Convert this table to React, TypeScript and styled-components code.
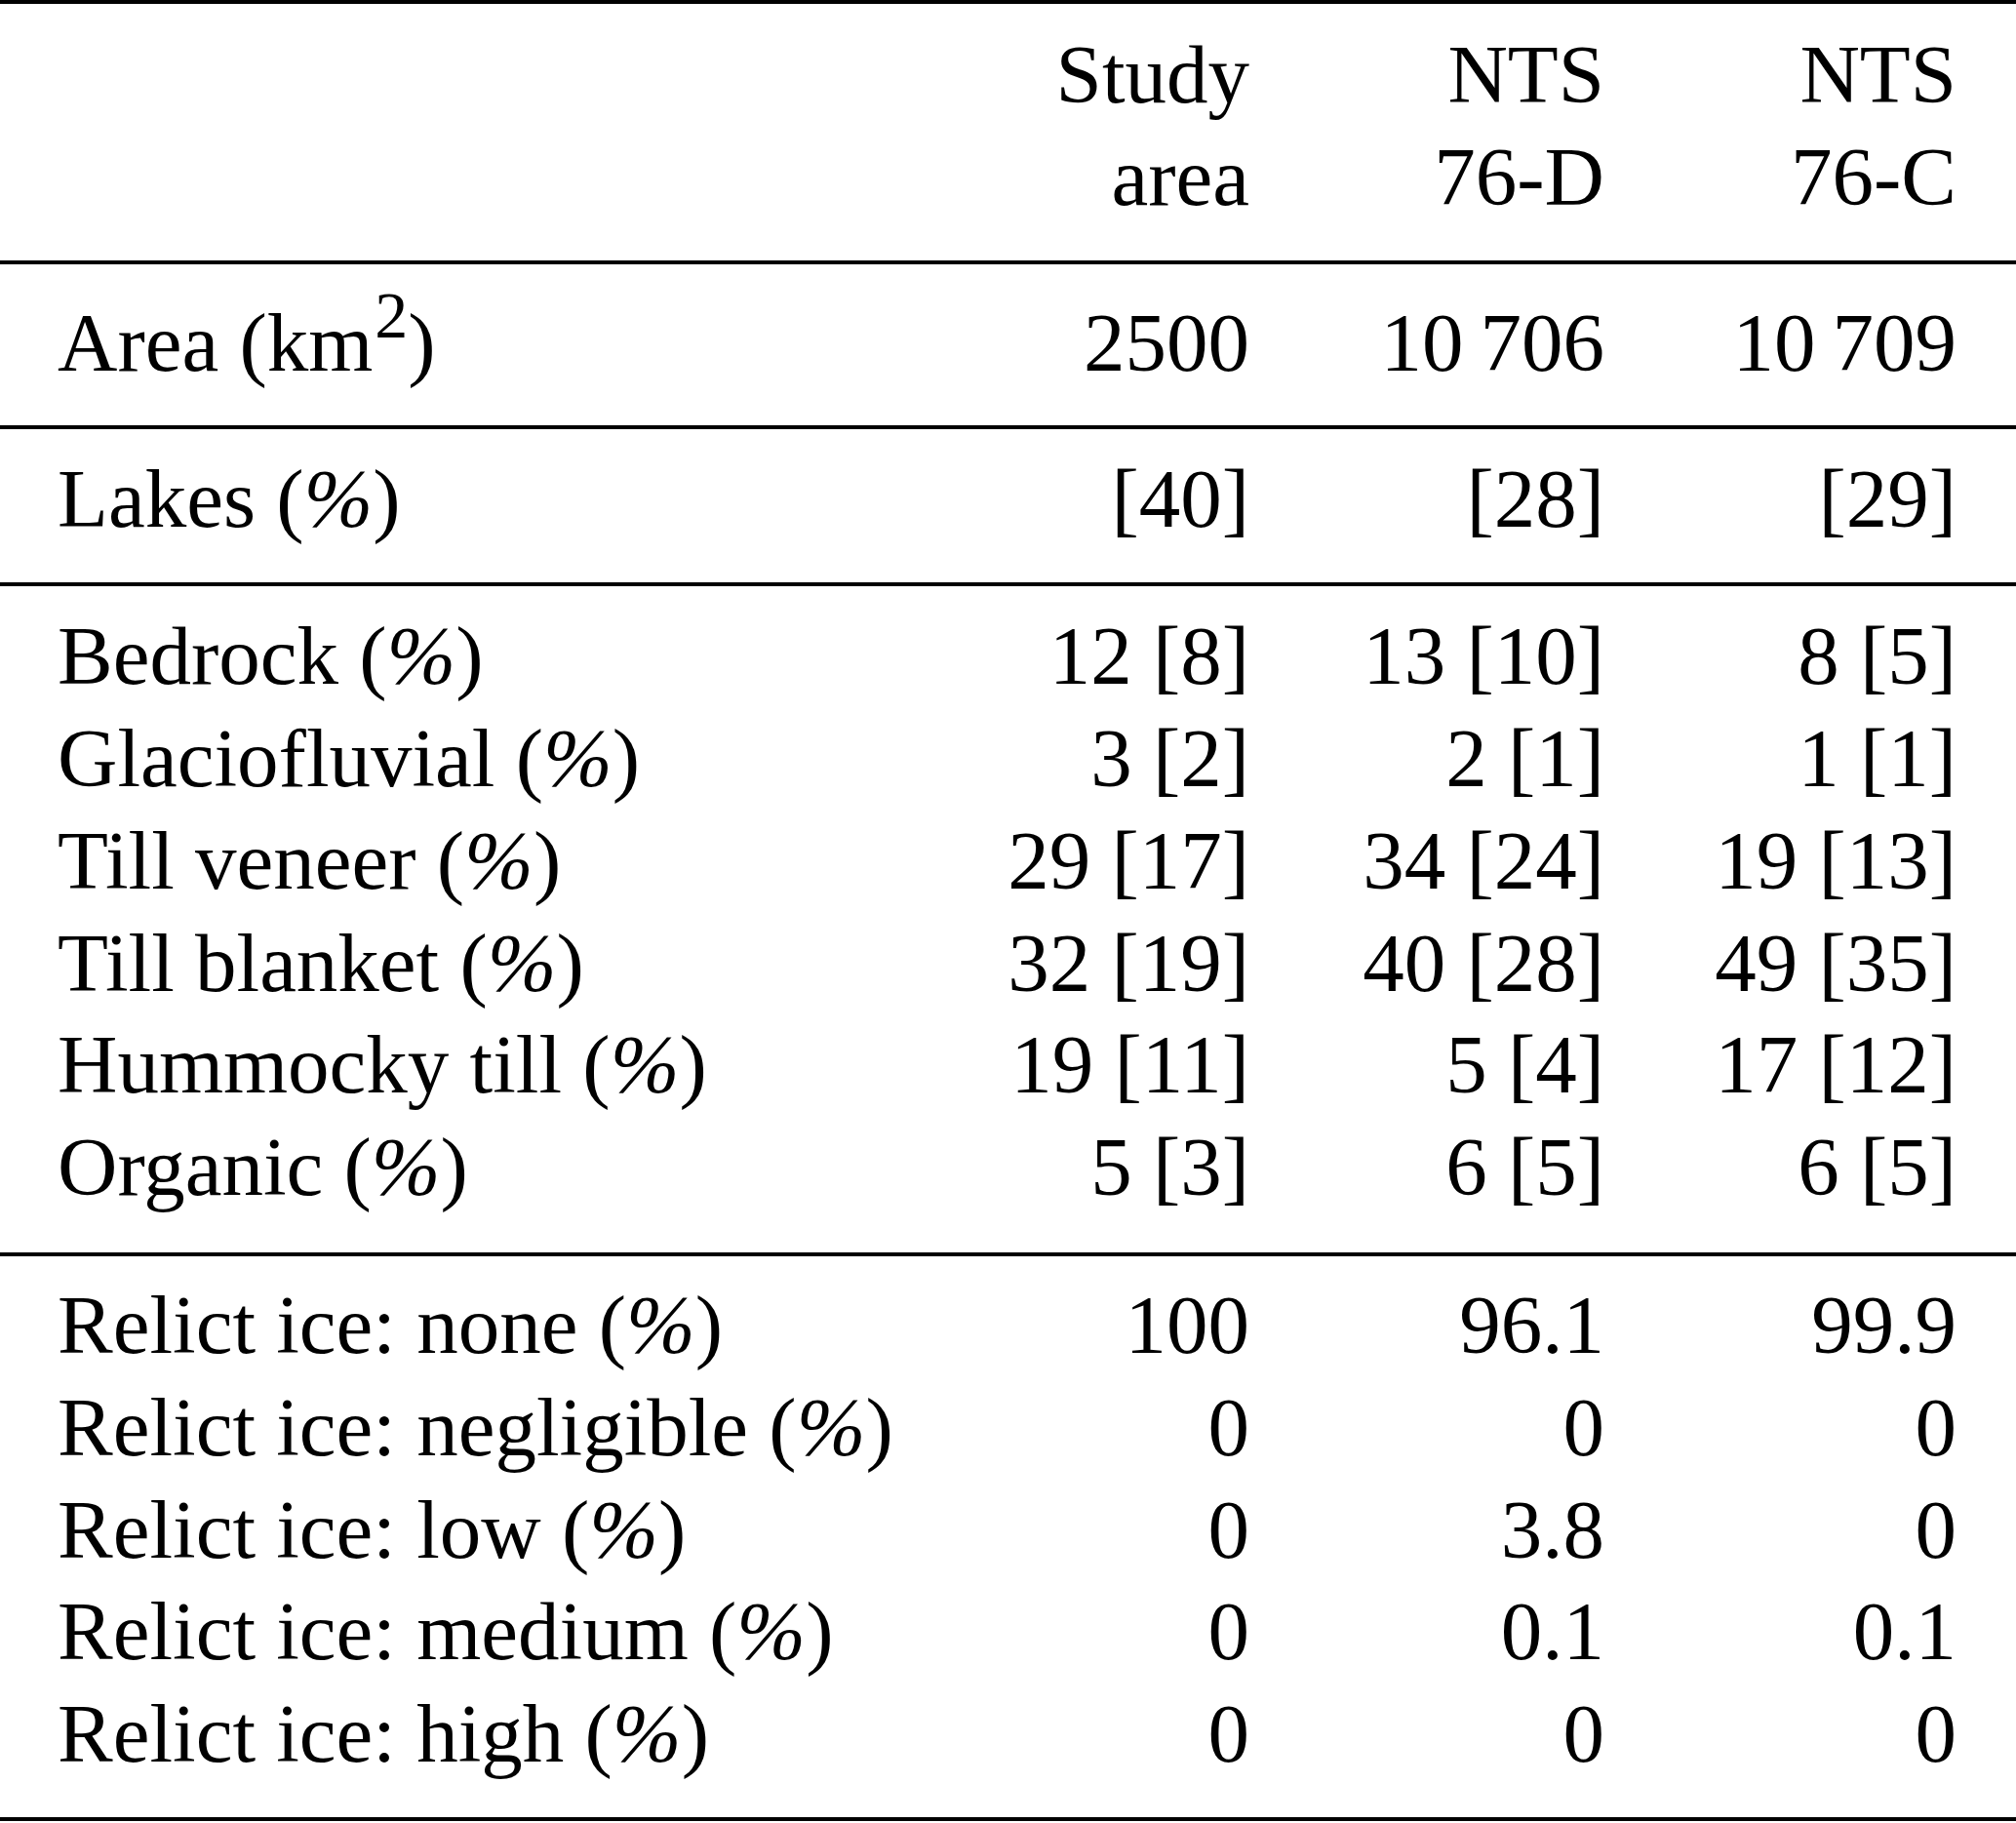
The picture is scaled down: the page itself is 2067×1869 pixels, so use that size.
import styled, { createGlobalStyle } from "styled-components";

const GlobalStyle = createGlobalStyle`
	html, body {
		margin: 0;
		padding: 0;
		background: #fff;
		overflow: hidden;
	}
	body {
		font-family: "Liberation Serif", "Times New Roman", serif;
		color: #000;
	}
`;

const Table = styled.div`
	width: 2067px;
	border-top: 4px solid #000;
	font-size: 85px;
	line-height: 104.8px;
`;

const Section = styled.div<{ $top: number; $bottom: number }>`
	padding: ${(p) => p.$top}px 0 ${(p) => p.$bottom}px;
	border-bottom: 4px solid #000;
`;

const Row = styled.div`
	display: grid;
	grid-template-columns: 1fr 364px 364px 361px;
`;

const Label = styled.div`
	padding-left: 59px;
	white-space: nowrap;
`;

const Value = styled.div`
	padding-right: 61px;
	text-align: right;
	white-space: nowrap;
`;

const Pct = styled.span`
	font-style: italic;
`;

const Sup = styled.sup`
	font-size: 0.8em;
	line-height: 0;
	vertical-align: 34px;
	margin-left: 2px;
`;

const pct = (name: string) => (
	<>
		{name} (<Pct>%</Pct>)
	</>
);

const geology: [string, string, string, string][] = [
	["Bedrock", "12 [8]", "13 [10]", "8 [5]"],
	["Glaciofluvial", "3 [2]", "2 [1]", "1 [1]"],
	["Till veneer", "29 [17]", "34 [24]", "19 [13]"],
	["Till blanket", "32 [19]", "40 [28]", "49 [35]"],
	["Hummocky till", "19 [11]", "5 [4]", "17 [12]"],
	["Organic", "5 [3]", "6 [5]", "6 [5]"],
];

const relict: [string, string, string, string][] = [
	["Relict ice: none", "100", "96.1", "99.9"],
	["Relict ice: negligible", "0", "0", "0"],
	["Relict ice: low", "0", "3.8", "0"],
	["Relict ice: medium", "0", "0.1", "0.1"],
	["Relict ice: high", "0", "0", "0"],
];

const DataRow = ({ cells }: { cells: [string, string, string, string] }) => (
	<Row>
		<Label>{pct(cells[0])}</Label>
		<Value>{cells[1]}</Value>
		<Value>{cells[2]}</Value>
		<Value>{cells[3]}</Value>
	</Row>
);

export default function App() {
	return (
		<>
			<GlobalStyle />
			<Table>
				<Section $top={20} $bottom={33}>
					<Row>
						<Label />
						<Value>
							Study
							<br />
							area
						</Value>
						<Value>
							NTS
							<br />
							76-D
						</Value>
						<Value>
							NTS
							<br />
							76-C
						</Value>
					</Row>
				</Section>

				<Section $top={28} $bottom={33}>
					<Row>
						<Label>
							Area (km<Sup>2</Sup>)
						</Label>
						<Value>2500</Value>
						<Value>10{"\u2009"}706</Value>
						<Value>10{"\u2009"}709</Value>
					</Row>
				</Section>

				<Section $top={19} $bottom={33}>
					<DataRow cells={["Lakes", "[40]", "[28]", "[29]"]} />
				</Section>

				<Section $top={19} $bottom={35}>
					{geology.map((g) => (
						<DataRow key={g[0]} cells={g} />
					))}
				</Section>

				<Section $top={18} $bottom={33}>
					{relict.map((r) => (
						<DataRow key={r[0]} cells={r} />
					))}
				</Section>
			</Table>
		</>
	);
}
